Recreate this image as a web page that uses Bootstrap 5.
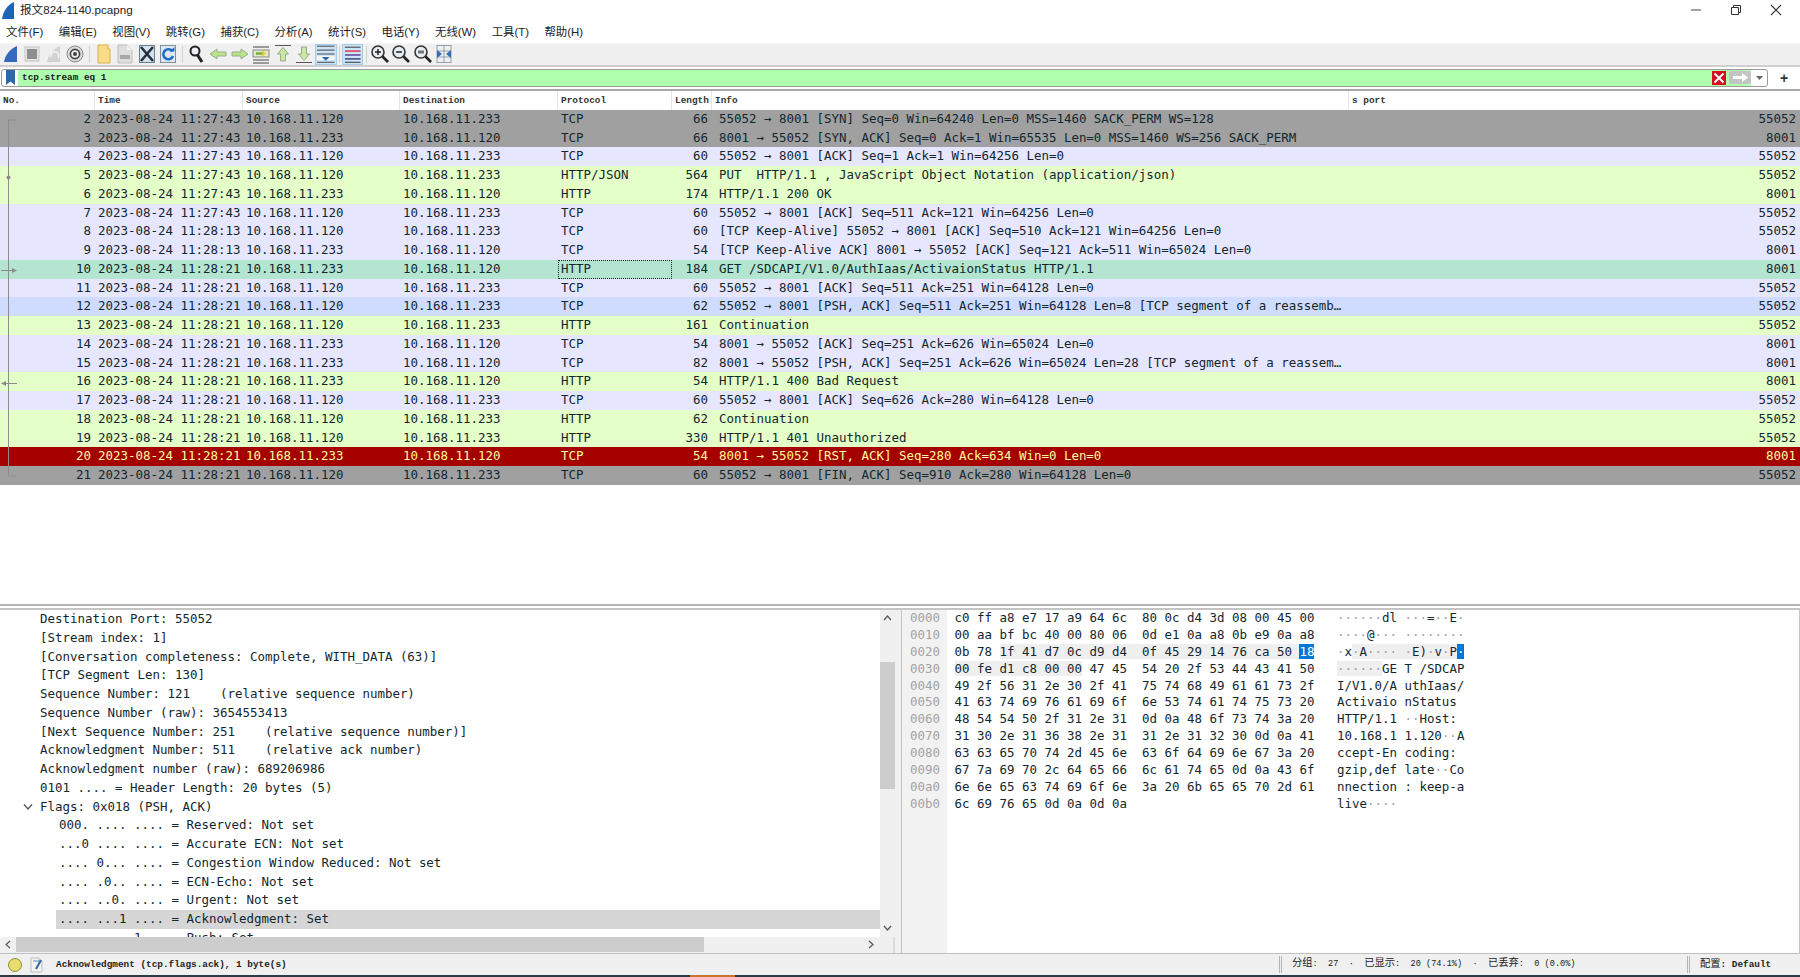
<!DOCTYPE html>
<html lang="zh">
<head>
<meta charset="utf-8">
<title>报文824-1140.pcapng</title>
<link href="https://cdn.jsdelivr.net/npm/bootstrap@5.3.0/dist/css/bootstrap.min.css" rel="stylesheet">
<style>
html,body{height:977px;overflow:hidden;background:#fff}
body{font-family:"DejaVu Sans Mono","Noto Sans CJK SC",monospace;font-size:12.46px;color:#12272e}
.shell{height:977px}
.titlebar{height:21px;font:11.6px/20px "Liberation Sans","Noto Sans CJK SC",sans-serif;color:#222}
.titlebar .ttl{padding-left:4px}
.winbtns{gap:28px;padding-right:18px}
.menubar{height:22px;gap:15.5px;padding-left:6px;font:11.4px/22px "Liberation Sans","Noto Sans CJK SC",sans-serif;color:#222}
.toolbar{height:24px;background:#f0f0f0;border-top:1px solid #f7f7f7;border-bottom:2px solid #cfcfcf}
.tb{width:21.5px;height:21px;flex:none}
.tb svg{width:20px;height:20px}
.tb-on{background:#cce4f7;border:1px solid #a5cdea;width:21.5px}
.tb-sep{width:7px;flex:none}
.tb-sep::after{content:"";display:block;width:1px;height:17px;background:#d2d2d2;margin:auto}
.filterrow{height:22px;padding:2px 0 1px 1px}
.fbox{width:1767px;height:18px;border:1px solid #9a9a9a;border-radius:3px;overflow:hidden;background:#fff}
.fmark{width:16px;flex:none}
.ftext{background:#afffaf;font:700 9.4px/16px "Liberation Mono",monospace;color:#1a1a1a;padding-left:4px}
.fbtnx{width:14px;height:14px;background:#d40f1f;margin-left:-1px;flex:none}
.fgo{width:22px;height:13px;background:#c4c4c4;border-radius:2px;margin-left:3px;flex:none}
.fdrop{width:16px;flex:none}
.fplus{width:32px;font:700 14px/18px "Liberation Sans",sans-serif;color:#333;text-align:center}
.phead{height:21px;border-top:2px solid #a8a8a8;font:700 9.4px/19px "Liberation Mono",monospace;color:#333;background:#fff}
.phead>div{border-right:1px solid #e4e4e4;padding-left:3px;flex:none;height:19px}
.c0{width:95px}.c1{width:148px}.c2{width:157px}.c3{width:158px}.c4{width:114px}.c5{width:40px}.c6{width:637px}
.phead>.c6{border-right:1px solid #e4e4e4}
.plist{height:495px;border-bottom:0}
.ptable{table-layout:fixed;width:1800px;margin:0;border-collapse:collapse}
.ptable.table>tbody>tr>td{height:18.75px;padding:0 4px 0 3px;line-height:18.75px;border:0;white-space:pre;overflow:hidden;box-shadow:none;color:inherit;background-color:transparent;font-size:12.46px}
.ptable td.num{text-align:right}
.ptable td.lenc{text-align:right;padding-right:0}
.ptable.table>tbody>tr>td.infoc{padding-left:7px}
.ptable td.port{text-align:right}
.r-gr{background:#a0a0a0;color:#12272e}
.r-tc{background:#e7e6ff;color:#12272e}
.r-ht{background:#e4ffc7;color:#12272e}
.r-se{background:#b4e5d0;color:#12272e}
.r-ps{background:#cfdcff;color:#12272e}
.r-rs{background:#a40000;color:#fffc9c}
.ptable.table>tbody>tr>td.foc{outline:1px dotted #222;outline-offset:-1px}
.treeline{position:absolute;left:0;top:0;pointer-events:none}
.splitter{height:6px;background:#fff;border-top:2px solid #b5b5b5;border-bottom:2px solid #c4c4c4}
.lower{height:343px}
.leftp{width:895px;flex:none}
.tree{height:327px}
.treelist{flex:1 1 auto;overflow:hidden;border-right:0}
.tl{height:18.75px;line-height:18.75px;white-space:pre;position:relative}
.l1{padding-left:40px}
.l2{padding-left:59px}
.tl-sel{margin-left:56px;padding-left:3px;background:#d6d6d6}
.chev{position:absolute;left:23px;top:5px}
.vscroll{width:15px;flex:none;background:#f0f0f0}
.vthumb{position:absolute;left:0;top:52px;width:15px;height:127px;background:#cdcdcd}
.vscroll,.hscroll{position:relative}
.hscroll{height:16px;background:#f0f0f0;border-right:2px solid #dcdcdc}
.hthumb{position:absolute;left:16px;top:0;width:688px;height:15px;background:#cdcdcd}
.sb-ar{position:absolute;color:#555}
.gap-pane{width:6px;flex:none;background:#f0f0f0}
.rightp{flex:1 1 auto;border:1px solid #c4c4c4;border-bottom:0;border-top:0;overflow:hidden}
.ofs{width:45px;flex:none;background:#f2f2f2;color:#a3a3a3;padding-left:8px;padding-top:0}
.hexc{padding-left:7.5px}
.ascc{padding-left:22.5px}
.hl{height:16.9px;line-height:16.9px;white-space:pre}
.nd{color:#a0a0a0}
.sel-l{background:#efefef}
.sel-b{background:#0078d7;color:#fff}
.statusb{height:22px;background:#f0f0f0;border-top:1px solid #c0c0c0;font:9.4px/21px "Liberation Mono",monospace;color:#222;white-space:pre}
.sico{width:14px;height:14px;border-radius:50%;background:#e6dd6a;border:1px solid #8f8f3c;margin-left:8px;flex:none}
.sedit{margin-left:8px;flex:none}
.smsg{padding-left:13px;font-weight:700;width:1236px;flex:none}
.sdiv{width:3px;height:17px;border-left:1px solid #b4b4b4;border-right:1px solid #b4b4b4;flex:none}
.scount{width:405px;padding-left:10px;flex:none;font-size:8.6px}
.scount em,.sprof em{font:normal 10.3px "Noto Sans CJK SC",sans-serif}
.sprof{padding-left:10px;font-weight:700}
.taskstrip{height:2px;background:#2b3a44}
.taskstrip span{display:block;width:45px;height:2px;margin-left:690px;background:#c8752f}
</style>
</head>
<body>
<div class="shell d-flex flex-column">

<div class="titlebar d-flex align-items-center justify-content-between flex-none">
  <div class="d-flex align-items-center">
    <svg class="ms-0" width="16" height="20" viewBox="0 0 16 20"><path d="M2 19 C3 12 7 5 14 2 L14 19 Z" fill="#1d63b8"/></svg>
    <span class="ttl">报文824-1140.pcapng</span>
  </div>
  <div class="winbtns d-flex align-items-center">
    <svg width="12" height="12" viewBox="0 0 12 12"><path d="M1 6H11" stroke="#444" stroke-width="1"/></svg>
    <svg width="12" height="12" viewBox="0 0 12 12"><path d="M1.5 3.5H8.5V10.5H1.5ZM3.5 3.5V1.5H10.5V8.5H8.5" fill="none" stroke="#333"/></svg>
    <svg width="12" height="12" viewBox="0 0 12 12"><path d="M1 1L11 11M11 1L1 11" stroke="#333" stroke-width="1.1"/></svg>
  </div>
</div>

<div class="menubar d-flex">
  <span>文件(F)</span><span>编辑(E)</span><span>视图(V)</span><span>跳转(G)</span><span>捕获(C)</span><span>分析(A)</span><span>统计(S)</span><span>电话(Y)</span><span>无线(W)</span><span>工具(T)</span><span>帮助(H)</span>
</div>

<div class="toolbar d-flex align-items-center">
  <div class="tb d-flex align-items-center justify-content-center"><svg viewBox="0 0 20 20"><path d="M3 18 C4 11 9 5 16 2 L16 18 Z" fill="#3569bb"/></svg></div>
  <div class="tb d-flex align-items-center justify-content-center"><svg viewBox="0 0 20 20"><rect x="3" y="3" width="14" height="14" fill="#e4e4e4" stroke="#c4c4c4"/><rect x="5" y="5" width="10" height="10" fill="#8e8e8e"/></svg></div>
  <div class="tb d-flex align-items-center justify-content-center"><svg viewBox="0 0 20 20"><path d="M3 18 C4 11 9 5 16 2 L16 18 Z" fill="#d2d2d2"/><path d="M7 13a4 4 0 1 1 7 1" fill="none" stroke="#f4f4f4" stroke-width="1.6"/></svg></div>
  <div class="tb d-flex align-items-center justify-content-center"><svg viewBox="0 0 20 20"><circle cx="10" cy="10" r="8" fill="#dadada" stroke="#8a8a8a"/><circle cx="10" cy="10" r="4.6" fill="#eee" stroke="#444" stroke-width="1.6"/><circle cx="10" cy="10" r="2" fill="#444"/></svg></div>
  <div class="tb-sep"></div>
  <div class="tb d-flex align-items-center justify-content-center"><svg viewBox="0 0 20 20"><path d="M4 1H14V5H16V19H4Z" fill="#fbdc86" stroke="#d8b04a"/></svg></div>
  <div class="tb d-flex align-items-center justify-content-center"><svg viewBox="0 0 20 20"><path d="M3 1H12L17 6V19H3Z" fill="#dedede" stroke="#c0c0c0"/><rect x="5" y="11" width="10" height="4" fill="#a8a8a8"/><path d="M12 1V6H17" fill="#f2f2f2"/></svg></div>
  <div class="tb d-flex align-items-center justify-content-center"><svg viewBox="0 0 20 20"><rect x="2.5" y="1.5" width="15" height="17" fill="#d4e2ef" stroke="#6b7d8a"/><path d="M4 3L16 17M16 3L4 17" stroke="#24313a" stroke-width="2.6"/></svg></div>
  <div class="tb d-flex align-items-center justify-content-center"><svg viewBox="0 0 20 20"><rect x="2.5" y="1.5" width="15" height="17" fill="#dfe8f0" stroke="#7f8f9a"/><path d="M14.5 7.5A5 5 0 1 0 15 12" fill="none" stroke="#1f6fc4" stroke-width="2.6"/><path d="M11.5 7.5H16.5V3Z" fill="#1f6fc4"/></svg></div>
  <div class="tb-sep"></div>
  <div class="tb d-flex align-items-center justify-content-center"><svg viewBox="0 0 20 20"><circle cx="8" cy="7" r="4.5" fill="#eef" stroke="#222" stroke-width="2"/><path d="M10.5 11L15 18" stroke="#222" stroke-width="3"/></svg></div>
  <div class="tb d-flex align-items-center justify-content-center"><svg viewBox="0 0 20 20"><path d="M2 10L9 5V8H18V12H9V15Z" fill="#b9e58b" stroke="#9aa98c"/></svg></div>
  <div class="tb d-flex align-items-center justify-content-center"><svg viewBox="0 0 20 20"><path d="M18 10L11 5V8H2V12H11V15Z" fill="#b9e58b" stroke="#9aa98c"/></svg></div>
  <div class="tb d-flex align-items-center justify-content-center"><svg viewBox="0 0 20 20"><path d="M2 3H18M2 16H18M2 19H18" stroke="#444"/><rect x="2" y="6" width="16" height="7" fill="#e6e6c8" stroke="#888"/><path d="M5 9.5H12" stroke="#6fae35" stroke-width="2.4"/><path d="M11 6.5L15 9.5L11 12.5Z" fill="#e2c72c"/></svg></div>
  <div class="tb d-flex align-items-center justify-content-center"><svg viewBox="0 0 20 20"><path d="M2 1.5H18" stroke="#555"/><path d="M10 3.5L15.5 10H12.5V17H7.5V10H4.5Z" fill="#c8eaa0" stroke="#9aa98c"/></svg></div>
  <div class="tb d-flex align-items-center justify-content-center"><svg viewBox="0 0 20 20"><path d="M2 18.5H18" stroke="#555"/><path d="M10 16.5L15.5 10H12.5V3H7.5V10H4.5Z" fill="#c8eaa0" stroke="#9aa98c"/></svg></div>
  <div class="tb tb-on d-flex align-items-center justify-content-center"><svg viewBox="0 0 20 20"><path d="M1 2H19M1 6H19M1 10H19M1 18.5H19" stroke="#444" stroke-width="1"/><rect x="1" y="12" width="18" height="4" fill="#f6f6f6"/><path d="M6 13H14L10 17Z" fill="#2a69ad"/></svg></div>
  <div class="tb-sep" style="width:5px"></div>
  <div class="tb tb-on d-flex align-items-center justify-content-center"><svg viewBox="0 0 20 20"><path d="M2 3H18" stroke="#333"/><path d="M2 7H18" stroke="#e0516a" stroke-width="1.8"/><path d="M2 11H18" stroke="#6a5aa8" stroke-width="1.8"/><path d="M2 15H18" stroke="#4a4a7a" stroke-width="1.6"/><path d="M2 18.5H18" stroke="#333"/></svg></div>
  <div class="tb-sep" style="width:6px"></div>
  <div class="tb d-flex align-items-center justify-content-center"><svg viewBox="0 0 20 20"><circle cx="8" cy="8" r="6" fill="#e7eef3" stroke="#333" stroke-width="1.6"/><path d="M5 8H11M8 5V11" stroke="#222" stroke-width="1.5"/><path d="M12.5 12.5L18 18" stroke="#222" stroke-width="2.6"/></svg></div>
  <div class="tb d-flex align-items-center justify-content-center"><svg viewBox="0 0 20 20"><circle cx="8" cy="8" r="6" fill="#e7eef3" stroke="#333" stroke-width="1.6"/><path d="M5 8H11" stroke="#222" stroke-width="1.5"/><path d="M12.5 12.5L18 18" stroke="#222" stroke-width="2.6"/></svg></div>
  <div class="tb d-flex align-items-center justify-content-center"><svg viewBox="0 0 20 20"><circle cx="8" cy="8" r="6" fill="#e7eef3" stroke="#333" stroke-width="1.6"/><rect x="5" y="6.5" width="6" height="3" fill="#777"/><path d="M12.5 12.5L18 18" stroke="#222" stroke-width="2.6"/></svg></div>
  <div class="tb d-flex align-items-center justify-content-center"><svg viewBox="0 0 20 20"><path d="M3 1.5H17M3 18.5H17M3 7H17M3 13H17M3 1V19M17 1V19M10 1V19" stroke="#8a97a3" stroke-width=".9"/><path d="M3 6L8 10L3 14Z" fill="#2f6fb5"/><path d="M17 6L12 10L17 14Z" fill="#2f6fb5"/></svg></div>
</div>

<div class="filterrow d-flex">
  <div class="fbox d-flex align-items-center">
    <div class="fmark d-flex justify-content-center align-items-center"><svg width="9" height="15" viewBox="0 0 9 15"><path d="M0 0H9V15L4.500 11.500L0 15Z" fill="#2f68a8"/></svg></div>
    <div class="ftext flex-grow-1 d-flex align-items-center justify-content-between">
      <span>tcp.stream eq 1</span>
    </div>
    <div class="h-100 d-flex align-items-center" style="background:#afffaf">
      <div class="fbtnx d-flex align-items-center justify-content-center"><svg width="12" height="12" viewBox="0 0 12 12"><path d="M1.500 1.500L10.500 10.500M10.500 1.500L1.500 10.500" stroke="#fff" stroke-width="1.900"/></svg></div>
      <div class="fgo d-flex align-items-center justify-content-center"><svg width="16" height="9" viewBox="0 0 16 9"><path d="M1 3H10V0L16 4.500L10 9V6H1Z" fill="#fff"/></svg></div>
    </div>
    <div class="fdrop d-flex align-items-center justify-content-center"><svg width="7" height="4" viewBox="0 0 7 4"><path d="M0 0H7L3.500 4Z" fill="#666"/></svg></div>
  </div>
  <div class="fplus">+</div>
</div>

<div class="phead d-flex">
  <div class="c0">No.</div><div class="c1">Time</div><div class="c2">Source</div><div class="c3">Destination</div><div class="c4">Protocol</div><div class="c5">Length</div><div class="c6">Info</div><div class="flex-grow-1" style="flex:1 1 auto;border:0">s port</div>
</div>

<div class="plist position-relative">
<table class="table ptable">
<colgroup><col style="width:95px"><col style="width:148px"><col style="width:157px"><col style="width:158px"><col style="width:114px"><col style="width:40px"><col style="width:637px"><col></colgroup>
<tbody>
<tr class="r-gr"><td class="num">2</td><td>2023-08-24 11:27:43</td><td>10.168.11.120</td><td>10.168.11.233</td><td>TCP</td><td class="lenc">66</td><td class="infoc">55052 → 8001 [SYN] Seq=0 Win=64240 Len=0 MSS=1460 SACK_PERM WS=128</td><td class="port">55052</td></tr>
<tr class="r-gr"><td class="num">3</td><td>2023-08-24 11:27:43</td><td>10.168.11.233</td><td>10.168.11.120</td><td>TCP</td><td class="lenc">66</td><td class="infoc">8001 → 55052 [SYN, ACK] Seq=0 Ack=1 Win=65535 Len=0 MSS=1460 WS=256 SACK_PERM</td><td class="port">8001</td></tr>
<tr class="r-tc"><td class="num">4</td><td>2023-08-24 11:27:43</td><td>10.168.11.120</td><td>10.168.11.233</td><td>TCP</td><td class="lenc">60</td><td class="infoc">55052 → 8001 [ACK] Seq=1 Ack=1 Win=64256 Len=0</td><td class="port">55052</td></tr>
<tr class="r-ht"><td class="num">5</td><td>2023-08-24 11:27:43</td><td>10.168.11.120</td><td>10.168.11.233</td><td>HTTP/JSON</td><td class="lenc">564</td><td class="infoc">PUT  HTTP/1.1 , JavaScript Object Notation (application/json)</td><td class="port">55052</td></tr>
<tr class="r-ht"><td class="num">6</td><td>2023-08-24 11:27:43</td><td>10.168.11.233</td><td>10.168.11.120</td><td>HTTP</td><td class="lenc">174</td><td class="infoc">HTTP/1.1 200 OK</td><td class="port">8001</td></tr>
<tr class="r-tc"><td class="num">7</td><td>2023-08-24 11:27:43</td><td>10.168.11.120</td><td>10.168.11.233</td><td>TCP</td><td class="lenc">60</td><td class="infoc">55052 → 8001 [ACK] Seq=511 Ack=121 Win=64256 Len=0</td><td class="port">55052</td></tr>
<tr class="r-tc"><td class="num">8</td><td>2023-08-24 11:28:13</td><td>10.168.11.120</td><td>10.168.11.233</td><td>TCP</td><td class="lenc">60</td><td class="infoc">[TCP Keep-Alive] 55052 → 8001 [ACK] Seq=510 Ack=121 Win=64256 Len=0</td><td class="port">55052</td></tr>
<tr class="r-tc"><td class="num">9</td><td>2023-08-24 11:28:13</td><td>10.168.11.233</td><td>10.168.11.120</td><td>TCP</td><td class="lenc">54</td><td class="infoc">[TCP Keep-Alive ACK] 8001 → 55052 [ACK] Seq=121 Ack=511 Win=65024 Len=0</td><td class="port">8001</td></tr>
<tr class="r-se"><td class="num">10</td><td>2023-08-24 11:28:21</td><td>10.168.11.233</td><td>10.168.11.120</td><td class="foc">HTTP</td><td class="lenc">184</td><td class="infoc">GET /SDCAPI/V1.0/AuthIaas/ActivaionStatus HTTP/1.1</td><td class="port">8001</td></tr>
<tr class="r-tc"><td class="num">11</td><td>2023-08-24 11:28:21</td><td>10.168.11.120</td><td>10.168.11.233</td><td>TCP</td><td class="lenc">60</td><td class="infoc">55052 → 8001 [ACK] Seq=511 Ack=251 Win=64128 Len=0</td><td class="port">55052</td></tr>
<tr class="r-ps"><td class="num">12</td><td>2023-08-24 11:28:21</td><td>10.168.11.120</td><td>10.168.11.233</td><td>TCP</td><td class="lenc">62</td><td class="infoc">55052 → 8001 [PSH, ACK] Seq=511 Ack=251 Win=64128 Len=8 [TCP segment of a reassemb…</td><td class="port">55052</td></tr>
<tr class="r-ht"><td class="num">13</td><td>2023-08-24 11:28:21</td><td>10.168.11.120</td><td>10.168.11.233</td><td>HTTP</td><td class="lenc">161</td><td class="infoc">Continuation</td><td class="port">55052</td></tr>
<tr class="r-tc"><td class="num">14</td><td>2023-08-24 11:28:21</td><td>10.168.11.233</td><td>10.168.11.120</td><td>TCP</td><td class="lenc">54</td><td class="infoc">8001 → 55052 [ACK] Seq=251 Ack=626 Win=65024 Len=0</td><td class="port">8001</td></tr>
<tr class="r-tc"><td class="num">15</td><td>2023-08-24 11:28:21</td><td>10.168.11.233</td><td>10.168.11.120</td><td>TCP</td><td class="lenc">82</td><td class="infoc">8001 → 55052 [PSH, ACK] Seq=251 Ack=626 Win=65024 Len=28 [TCP segment of a reassem…</td><td class="port">8001</td></tr>
<tr class="r-ht"><td class="num">16</td><td>2023-08-24 11:28:21</td><td>10.168.11.233</td><td>10.168.11.120</td><td>HTTP</td><td class="lenc">54</td><td class="infoc">HTTP/1.1 400 Bad Request</td><td class="port">8001</td></tr>
<tr class="r-tc"><td class="num">17</td><td>2023-08-24 11:28:21</td><td>10.168.11.120</td><td>10.168.11.233</td><td>TCP</td><td class="lenc">60</td><td class="infoc">55052 → 8001 [ACK] Seq=626 Ack=280 Win=64128 Len=0</td><td class="port">55052</td></tr>
<tr class="r-ht"><td class="num">18</td><td>2023-08-24 11:28:21</td><td>10.168.11.120</td><td>10.168.11.233</td><td>HTTP</td><td class="lenc">62</td><td class="infoc">Continuation</td><td class="port">55052</td></tr>
<tr class="r-ht"><td class="num">19</td><td>2023-08-24 11:28:21</td><td>10.168.11.120</td><td>10.168.11.233</td><td>HTTP</td><td class="lenc">330</td><td class="infoc">HTTP/1.1 401 Unauthorized</td><td class="port">55052</td></tr>
<tr class="r-rs"><td class="num">20</td><td>2023-08-24 11:28:21</td><td>10.168.11.233</td><td>10.168.11.120</td><td>TCP</td><td class="lenc">54</td><td class="infoc">8001 → 55052 [RST, ACK] Seq=280 Ack=634 Win=0 Len=0</td><td class="port">8001</td></tr>
<tr class="r-gr"><td class="num">21</td><td>2023-08-24 11:28:21</td><td>10.168.11.120</td><td>10.168.11.233</td><td>TCP</td><td class="lenc">60</td><td class="infoc">55052 → 8001 [FIN, ACK] Seq=910 Ack=280 Win=64128 Len=0</td><td class="port">55052</td></tr>
</tbody>
</table>
<svg class="treeline" width="20" height="376" viewBox="0 0 20 376">
  <path d="M8.500 10V366M8.500 10H16M8.500 366H16" fill="none" stroke="#8c8c8c"/>
  <circle cx="8.500" cy="67.500" r="2" fill="#8c8c8c"/>
  <path d="M1 160.500H15" stroke="#8c8c8c"/><path d="M17 160.500L12 158V163Z" fill="#8c8c8c"/>
  <path d="M4 273.500H17" stroke="#8c8c8c"/><path d="M1 273.500L6 271V276Z" fill="#8c8c8c"/>
</svg>
</div>

<div class="splitter"></div>

<div class="lower d-flex flex-column">
  <div class="d-flex" style="height:343px">
    <div class="leftp d-flex flex-column">
      <div class="tree d-flex">
        <div class="treelist">
          <div class="tl l1">Destination Port: 55052</div>
          <div class="tl l1">[Stream index: 1]</div>
          <div class="tl l1">[Conversation completeness: Complete, WITH_DATA (63)]</div>
          <div class="tl l1">[TCP Segment Len: 130]</div>
          <div class="tl l1">Sequence Number: 121    (relative sequence number)</div>
          <div class="tl l1">Sequence Number (raw): 3654553413</div>
          <div class="tl l1">[Next Sequence Number: 251    (relative sequence number)]</div>
          <div class="tl l1">Acknowledgment Number: 511    (relative ack number)</div>
          <div class="tl l1">Acknowledgment number (raw): 689206986</div>
          <div class="tl l1">0101 .... = Header Length: 20 bytes (5)</div>
          <div class="tl l1"><svg class="chev" width="10" height="8" viewBox="0 0 10 8"><path d="M1 1.500L5 6L9 1.500" fill="none" stroke="#555" stroke-width="1.300"/></svg>Flags: 0x018 (PSH, ACK)</div>
          <div class="tl l2">000. .... .... = Reserved: Not set</div>
          <div class="tl l2">...0 .... .... = Accurate ECN: Not set</div>
          <div class="tl l2">.... 0... .... = Congestion Window Reduced: Not set</div>
          <div class="tl l2">.... .0.. .... = ECN-Echo: Not set</div>
          <div class="tl l2">.... ..0. .... = Urgent: Not set</div>
          <div class="tl tl-sel">.... ...1 .... = Acknowledgment: Set</div>
          <div class="tl l2">.... .... 1... = Push: Set</div>
        </div>
        <div class="vscroll">
          <svg class="sb-ar" style="left:3px;top:5px" width="9" height="6" viewBox="0 0 9 6"><path d="M1 5L4.500 1L8 5" fill="none" stroke="#555" stroke-width="1.200"/></svg>
          <div class="vthumb"></div>
          <svg class="sb-ar" style="left:3px;top:315px" width="9" height="6" viewBox="0 0 9 6"><path d="M1 1L4.500 5L8 1" fill="none" stroke="#555" stroke-width="1.200"/></svg>
        </div>
      </div>
      <div class="hscroll">
        <svg class="sb-ar" style="left:5px;top:3px" width="6" height="9" viewBox="0 0 6 9"><path d="M5 1L1 4.500L5 8" fill="none" stroke="#555" stroke-width="1.200"/></svg>
        <div class="hthumb"></div>
        <svg class="sb-ar" style="left:868px;top:3px" width="6" height="9" viewBox="0 0 6 9"><path d="M1 1L5 4.500L1 8" fill="none" stroke="#555" stroke-width="1.200"/></svg>
      </div>
    </div>
    <div class="gap-pane"></div>
    <div class="rightp d-flex">
      <div class="ofs">
        <div class="hl">0000</div><div class="hl">0010</div><div class="hl">0020</div><div class="hl">0030</div><div class="hl">0040</div><div class="hl">0050</div><div class="hl">0060</div><div class="hl">0070</div><div class="hl">0080</div><div class="hl">0090</div><div class="hl">00a0</div><div class="hl">00b0</div>
      </div>
      <div class="hexc">
        <div class="hl">c0 ff a8 e7 17 a9 64 6c  80 0c d4 3d 08 00 45 00</div>
        <div class="hl">00 aa bf bc 40 00 80 06  0d e1 0a a8 0b e9 0a a8</div>
        <div class="hl">0b 78 <span class="sel-l">1f 41 d7 0c d9 d4  0f 45 29 14 76 ca 50 </span><span class="sel-b">18</span></div>
        <div class="hl"><span class="sel-l">00 fe d1 c8 00 00</span> 47 45  54 20 2f 53 44 43 41 50</div>
        <div class="hl">49 2f 56 31 2e 30 2f 41  75 74 68 49 61 61 73 2f</div>
        <div class="hl">41 63 74 69 76 61 69 6f  6e 53 74 61 74 75 73 20</div>
        <div class="hl">48 54 54 50 2f 31 2e 31  0d 0a 48 6f 73 74 3a 20</div>
        <div class="hl">31 30 2e 31 36 38 2e 31  31 2e 31 32 30 0d 0a 41</div>
        <div class="hl">63 63 65 70 74 2d 45 6e  63 6f 64 69 6e 67 3a 20</div>
        <div class="hl">67 7a 69 70 2c 64 65 66  6c 61 74 65 0d 0a 43 6f</div>
        <div class="hl">6e 6e 65 63 74 69 6f 6e  3a 20 6b 65 65 70 2d 61</div>
        <div class="hl">6c 69 76 65 0d 0a 0d 0a</div>
      </div>
      <div class="ascc">
        <div class="hl"><span class="nd">······</span>dl <span class="nd">···</span>=<span class="nd">··</span>E<span class="nd">·</span></div>
        <div class="hl"><span class="nd">····</span>@<span class="nd">···</span> <span class="nd">········</span></div>
        <div class="hl"><span class="nd">·</span>x<span class="sel-l"><span class="nd">·</span>A<span class="nd">····</span> <span class="nd">·</span>E)<span class="nd">·</span>v<span class="nd">·</span>P</span><span class="sel-b">·</span></div>
        <div class="hl"><span class="sel-l"><span class="nd">······</span></span>GE T /SDCAP</div>
        <div class="hl">I/V1.0/A uthIaas/</div>
        <div class="hl">Activaio nStatus </div>
        <div class="hl">HTTP/1.1 <span class="nd">··</span>Host: </div>
        <div class="hl">10.168.1 1.120<span class="nd">··</span>A</div>
        <div class="hl">ccept-En coding: </div>
        <div class="hl">gzip,def late<span class="nd">··</span>Co</div>
        <div class="hl">nnection : keep-a</div>
        <div class="hl">live<span class="nd">····</span></div>
      </div>
    </div>
  </div>
</div>

<div class="statusb d-flex align-items-center">
  <div class="sico"></div>
  <svg class="sedit" width="13" height="16" viewBox="0 0 13 16"><path d="M1 1H9V4H12V15H1Z" fill="#f4f4f4" stroke="#bcbcbc"/><path d="M3 4H9" stroke="#7ea6cf" stroke-width="1.400"/><path d="M11 3L6 12" stroke="#3a6aa8" stroke-width="2.200"/></svg>
  <div class="smsg">Acknowledgment (tcp.flags.ack), 1 byte(s)</div>
  <div class="sdiv"></div>
  <div class="scount"><em>分组</em>:  27  ·  <em>已显示</em>:  20 (74.1%)  ·  <em>已丢弃</em>:  0 (0.0%)</div>
  <div class="sdiv"></div>
  <div class="sprof"><em>配置</em>: Default</div>
</div>
<div class="taskstrip"><span></span></div>

</div>
</body>
</html>
